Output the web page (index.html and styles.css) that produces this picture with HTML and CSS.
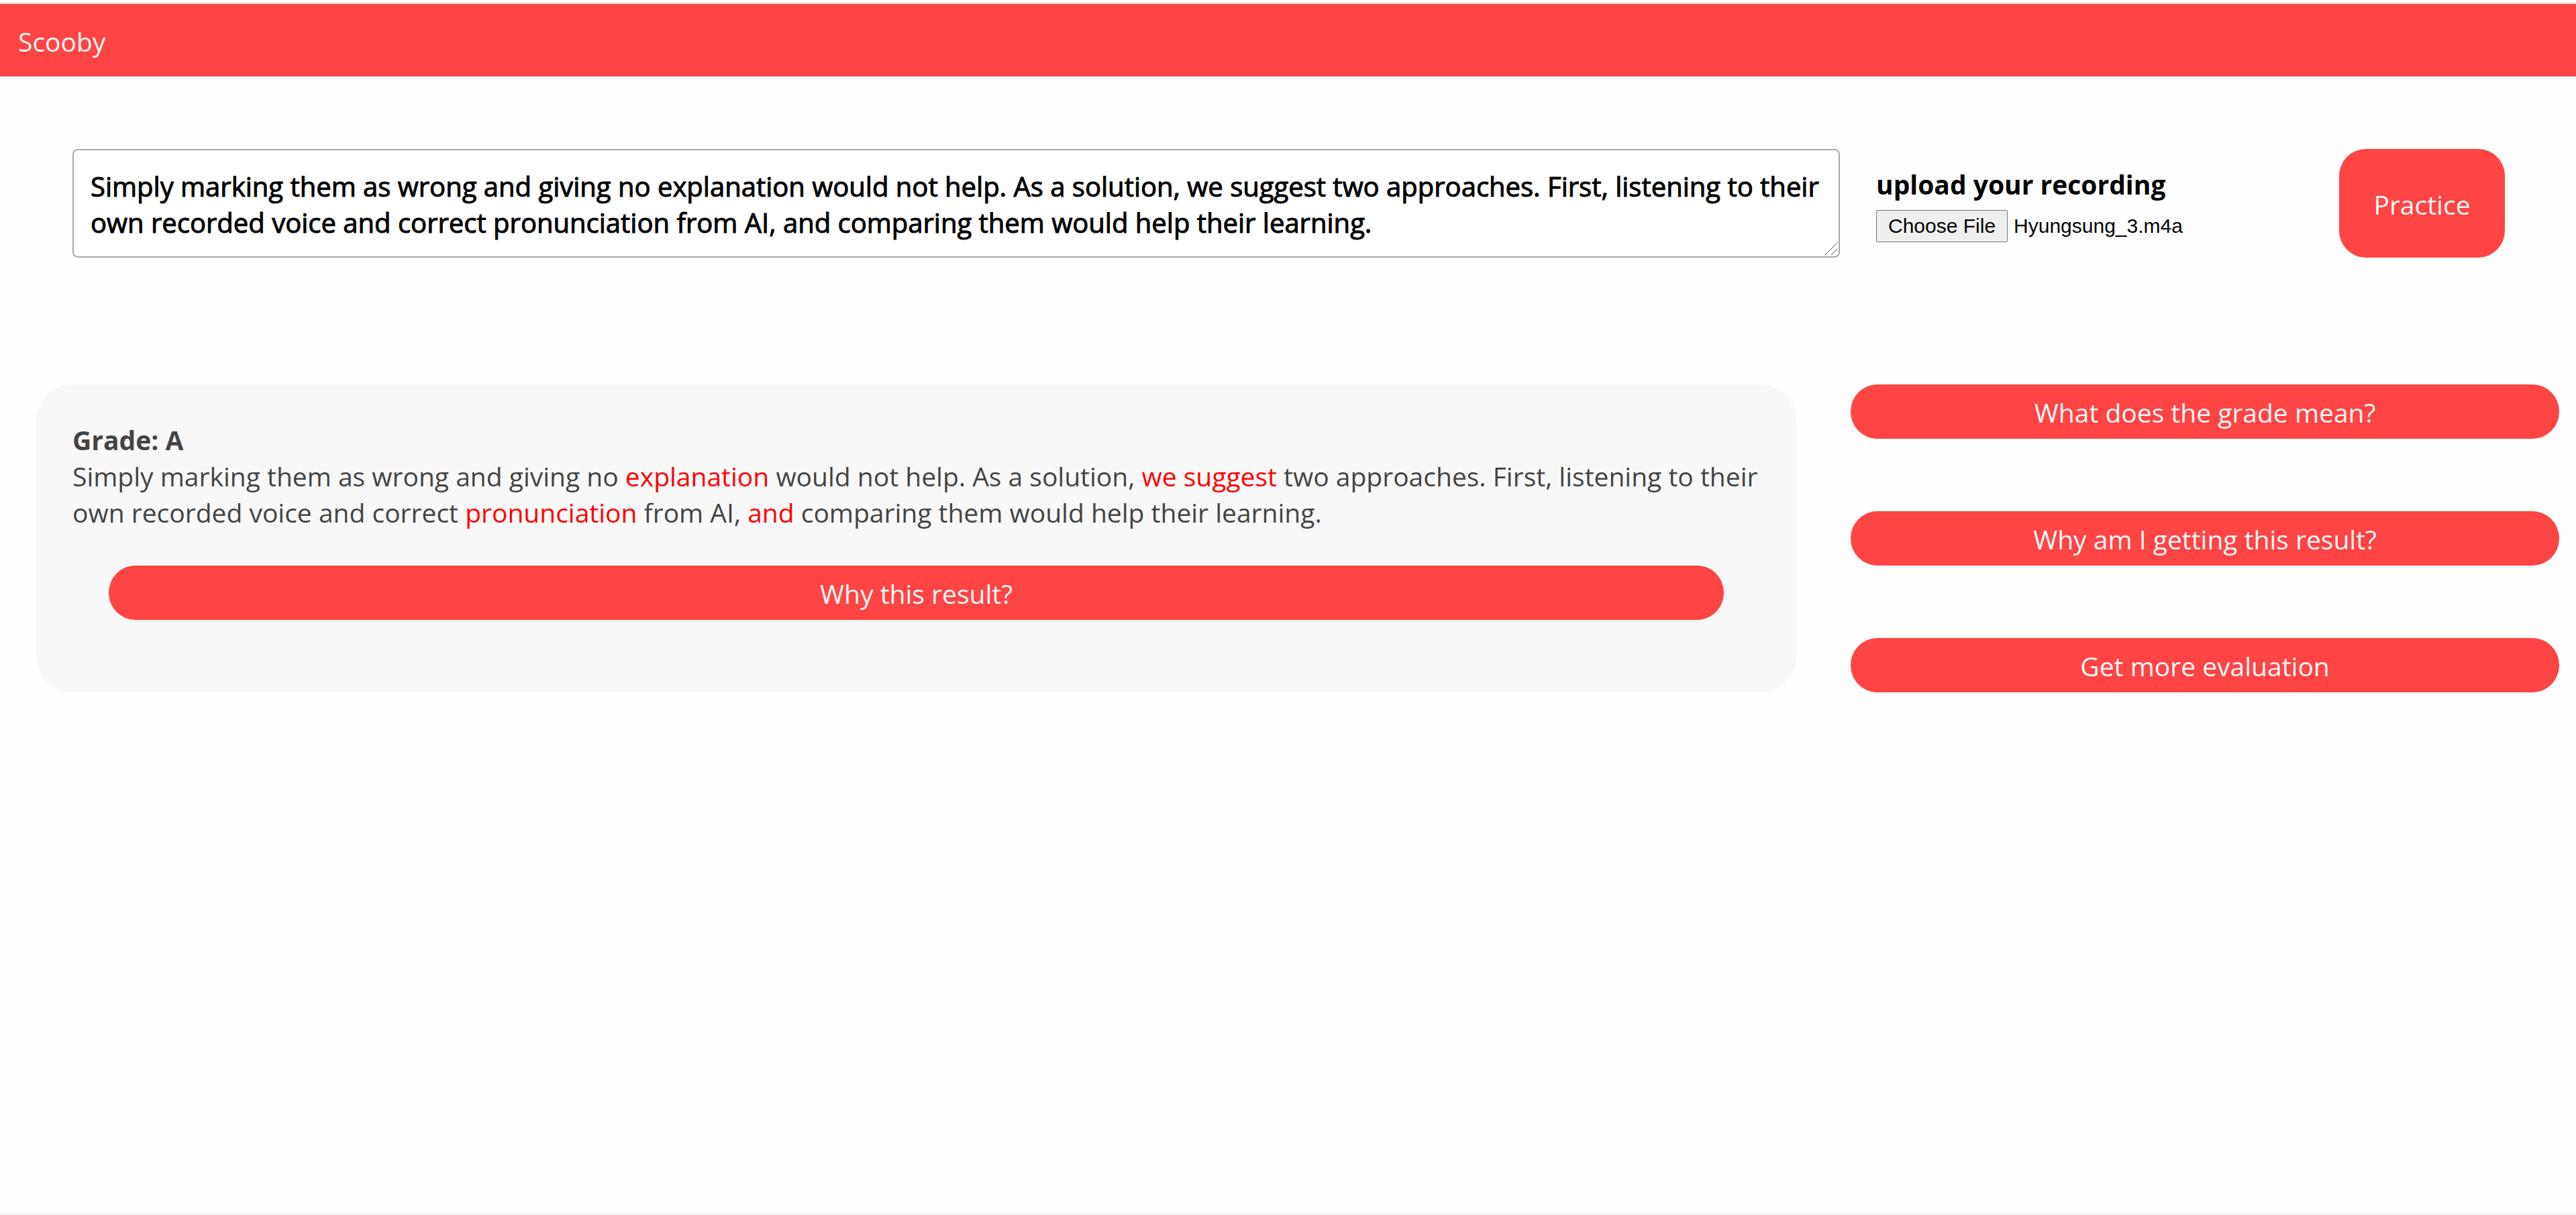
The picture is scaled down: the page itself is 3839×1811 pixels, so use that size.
FILE: index.html
```html
<!DOCTYPE html>
<html lang="en">
<head>
<meta charset="utf-8">
<title>Scooby</title>
<link rel="stylesheet" href="styles.css">
</head>
<body>
<header class="topbar"><a class="brand" href="#">Scooby</a></header>
<main class="content">
  <form class="practice-form">
    <div class="script-box">
      <textarea class="script" rows="2" aria-label="Script to practice">Simply marking them as wrong and giving no explanation would not help. As a solution, we suggest two approaches. First, listening to their own recorded voice and correct pronunciation from AI, and comparing them would help their learning.</textarea>
      <svg class="grip" viewBox="0 0 20 20" aria-hidden="true"><path d="M1 19 19 1M10 19l9-9" fill="none" stroke="#555" stroke-width="1"/></svg>
    </div>
    <div class="upload">
      <label class="upload-label" for="recording">upload your recording</label>
      <input class="upload-input" type="file" id="recording">
    </div>
    <button class="btn btn-practice" type="button">Practice</button>
  </form>
  <div class="results">
    <section class="card">
      <h2 class="grade">Grade: A</h2>
      <p class="transcript">Simply marking them as wrong and giving no <span class="miss">explanation</span> would not help. As a solution, <span class="miss">we suggest</span> two approaches. First, listening to their own recorded voice and correct <span class="miss">pronunciation</span> from AI, <span class="miss">and</span> comparing them would help their learning.</p>
      <button class="btn btn-why" type="button">Why this result?</button>
    </section>
    <div class="actions">
      <button class="btn" type="button">What does the grade mean?</button>
      <button class="btn" type="button">Why am I getting this result?</button>
      <button class="btn" type="button">Get more evaluation</button>
    </div>
  </div>
</main>
<footer class="footer"></footer>
<script src="script.js"></script>
</body>
</html>
```
FILE: styles.css
```css
* { box-sizing: border-box; }

body {
  display: flex;
  flex-direction: column;
  min-height: 100vh;
  margin: 0;
  padding-top: 4px;
  background: #fefefe;
  color: #000;
  font: 39px/54px "Segoe UI", "Open Sans", "Noto Sans", sans-serif;
}

.topbar {
  padding: 29px 27px 25px;
  border-top: 2px solid #dddde1;
  background: #ff4444;
}

.brand {
  display: block;
  color: #f8f8f8;
  text-decoration: none;
}

.content { flex: 1; }

.practice-form {
  display: grid;
  grid-template-columns: minmax(0, 1fr) 636px 247px;
  gap: 54px;
  align-items: center;
  padding: 108px 106px 0 108px;
}

.script-box { position: relative; }

.script {
  display: block;
  width: 100%;
  height: 162px;
  padding: 27px 25px 23px;
  border: 2px solid #a9a9a9;
  border-radius: 8px;
  background: #fff;
  color: #000;
  font: inherit;
  font-size: 40px;
  -webkit-text-stroke: 1px #000;
  overflow: hidden;
  resize: none;
}

.grip {
  position: absolute;
  right: 3px;
  bottom: 3px;
  width: 20px;
  height: 20px;
  pointer-events: none;
}

.upload {
  display: flex;
  flex-direction: column;
  gap: 11px;
  padding-top: 2px;
}

.upload-label { font-weight: 700; }

.upload-input {
  width: 100%;
  color: #000;
  font: 30px/34px "Liberation Sans", Arial, sans-serif;
}

.upload-input::file-selector-button {
  height: 48px;
  margin: 0 9px 0 0;
  padding: 0 17px;
  border: 1px solid #767676;
  border-radius: 2px;
  background: #efefef;
  color: #000;
  font: inherit;
}

.btn {
  display: block;
  height: 81px;
  padding: 3px 0 0;
  border: 0;
  border-radius: 40px;
  background: #ff4444;
  color: #f8f8f8;
  font: inherit;
}

.btn-practice { height: 162px; }

.results {
  display: grid;
  grid-template-columns: 71.3fr 28.7fr;
  gap: 81px;
  padding: 189px 25px 0 54px;
}

.card {
  display: flex;
  flex-direction: column;
  padding: 56px 54px 108px;
  border-radius: 54px;
  background: #f8f8f8;
  color: #444;
}

.grade {
  margin: 0;
  font: inherit;
  font-weight: 700;
}

.transcript { margin: 0; }

.miss { color: #ff0000; }

.btn-why { margin: 52px 54px 0; }

.actions {
  display: flex;
  flex-direction: column;
  justify-content: space-between;
}

.footer { border-top: 2px solid #f0f0f0; }
```
FILE: script.js
```js
const files = new DataTransfer();
files.items.add(new File([""], "Hyungsung_3.m4a", { type: "audio/mp4" }));
document.getElementById("recording").files = files.files;
```
